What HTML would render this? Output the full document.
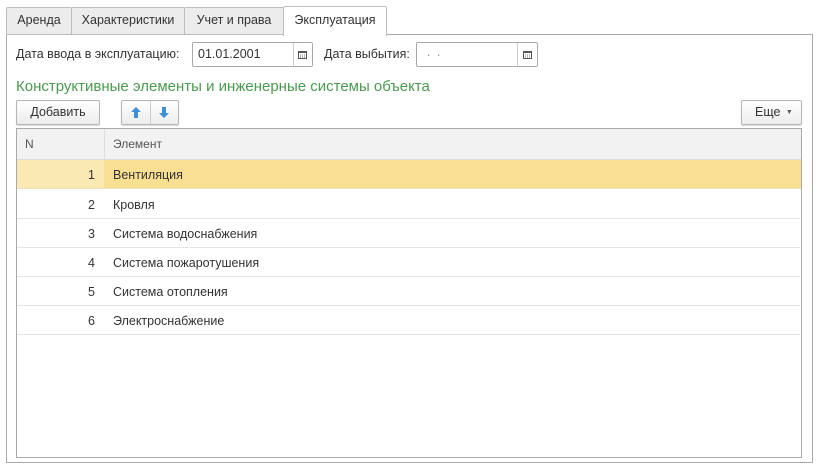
<!DOCTYPE html>
<html><head><meta charset="utf-8"><style>
*{box-sizing:border-box;margin:0;padding:0}
body{width:818px;height:473px;background:#fff;font-family:"Liberation Sans",Arial,sans-serif;font-size:12px;color:#333;position:relative;overflow:hidden}
.a{position:absolute}
.tab{position:absolute;top:7px;height:28px;border:1px solid #bdbdbd;background:#ececec;line-height:24px;text-align:center;color:#333;font-size:12.5px;border-radius:2px 2px 0 0}
.panel{left:6px;top:34px;width:807px;height:429px;border:1px solid #a9a9a9}
.inp{height:25px;border:1px solid #a9a9a9;border-radius:2px;background:#fff}
.btn{height:25px;border:1px solid #b5b5b5;border-radius:2px;background:linear-gradient(#fff,#ececec);box-shadow:0 1px 1px rgba(0,0,0,.15);text-align:center;line-height:23px;font-size:12.5px}
.row{position:absolute;left:1px;width:783px;height:29px;border-bottom:1px solid #e4e4e4;line-height:31px;font-size:12.5px}
.row .n{position:absolute;left:0;width:78px;text-align:right}
.row .t{position:absolute;left:96px}
</style></head><body>
<div class="a panel"></div>
<div class="tab" style="left:6px;width:66px">Аренда</div>
<div class="tab" style="left:71px;width:114px">Характеристики</div>
<div class="tab" style="left:184px;width:100px">Учет и права</div>
<div class="tab" style="left:283px;width:104px;top:6px;height:30px;background:#fff;border-bottom:none;line-height:26px">Эксплуатация</div>

<div class="a" style="left:16px;top:47px;font-size:12.5px">Дата ввода в эксплуатацию:</div>
<div class="a inp" style="left:192px;top:42px;width:121px"><span class="a" style="left:5px;top:4px;font-size:12.5px">01.01.2001</span><div class="a" style="left:100px;top:0;width:1px;height:23px;background:#ccc"></div><svg class="a" style="left:105px;top:7px" width="9" height="9"><rect x=".5" y="1.5" width="8" height="7" fill="none" stroke="#555"/><rect x="0" y="1" width="9" height="2" fill="#555"/><path d="M2 5h1M4 5h1M6 5h1M2 7h1M4 7h1M6 7h1" stroke="#777"/></svg></div>
<div class="a" style="left:324px;top:47px;font-size:12.5px">Дата выбытия:</div>
<div class="a inp" style="left:416px;top:42px;width:122px"><span class="a" style="left:10px;top:2px;color:#888">.&nbsp;&nbsp;.</span><div class="a" style="left:100px;top:0;width:1px;height:23px;background:#ccc"></div><svg class="a" style="left:106px;top:7px" width="9" height="9"><rect x=".5" y="1.5" width="8" height="7" fill="none" stroke="#555"/><rect x="0" y="1" width="9" height="2" fill="#555"/><path d="M2 5h1M4 5h1M6 5h1M2 7h1M4 7h1M6 7h1" stroke="#777"/></svg></div>

<div class="a" style="left:16px;top:78px;font-size:15px;color:#4a9a4f">Конструктивные элементы и инженерные системы объекта</div>

<div class="a btn" style="left:16px;top:100px;width:84px">Добавить</div>
<div class="a btn" style="left:121px;top:100px;width:58px"><div class="a" style="left:28px;top:0;width:1px;height:23px;background:#ccc"></div>
<svg class="a" style="left:8px;top:5px" width="12" height="13"><path d="M6 1L11 6H8V12H4V6H1Z" fill="#3d8fd6"/></svg>
<svg class="a" style="left:36px;top:5px" width="12" height="13"><path d="M6 12L11 7H8V1H4V7H1Z" fill="#3d8fd6"/></svg></div>
<div class="a btn" style="left:741px;top:100px;width:61px;text-align:left;padding-left:13px">Еще <span style="font-size:7px;color:#555;position:relative;top:-2px;left:2px">▼</span></div>

<div class="a" style="left:16px;top:128px;width:786px;height:330px;border:1px solid #a9a9a9">
<div class="a" style="left:0;top:0;width:784px;height:31px;background:#f2f2f2;border-bottom:1px solid #ddd"></div>
<div class="a" style="left:87px;top:0;width:1px;height:31px;background:#ddd"></div>
<div class="a" style="left:8px;top:8px;color:#555">N</div>
<div class="a" style="left:96px;top:8px;color:#555">Элемент</div>
<div class="row" style="top:31px;left:0;width:784px;background:#f9df91;border-bottom:1px solid #ece3c4"><div class="a" style="left:0;top:0;width:87px;height:28px;background:#fbe9b4"></div><span class="n" style="left:0">1</span><span class="t">Вентиляция</span></div>
<div class="row" style="top:61px;left:0"><span class="n">2</span><span class="t">Кровля</span></div>
<div class="row" style="top:90px;left:0"><span class="n">3</span><span class="t">Система водоснабжения</span></div>
<div class="row" style="top:119px;left:0"><span class="n">4</span><span class="t">Система пожаротушения</span></div>
<div class="row" style="top:148px;left:0"><span class="n">5</span><span class="t">Система отопления</span></div>
<div class="row" style="top:177px;left:0"><span class="n">6</span><span class="t">Электроснабжение</span></div>
</div>
</body></html>
